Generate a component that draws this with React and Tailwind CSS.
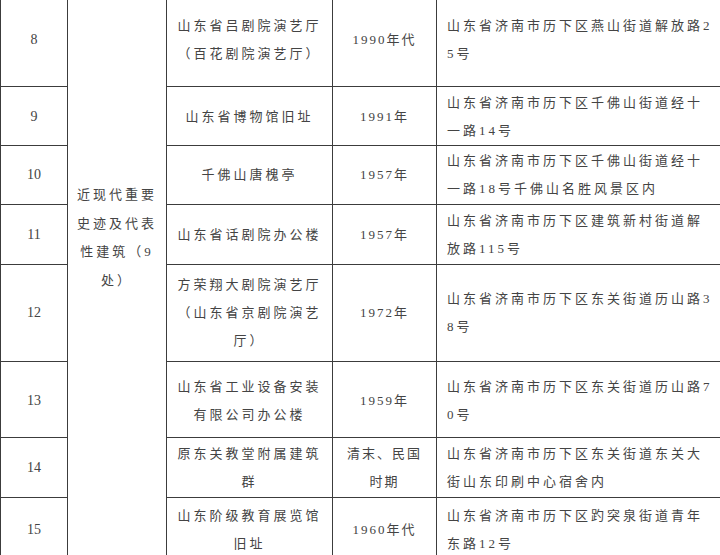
const rows = [
  {
    n: "8",
    name: ["山东省吕剧院演艺厅", "（百花剧院演艺厅）"],
    year: ["1990年代"],
    addr: ["山东省济南市历下区燕山街道解放路2", "5号"],
    h: "h-[86px]",
    pad: "pb-[6px]",
  },
  {
    n: "9",
    name: ["山东省博物馆旧址"],
    year: ["1991年"],
    addr: ["山东省济南市历下区千佛山街道经十", "一路14号"],
    h: "h-[59px]",
    pad: "pt-[2px]",
  },
  {
    n: "10",
    name: ["千佛山唐槐亭"],
    year: ["1957年"],
    addr: ["山东省济南市历下区千佛山街道经十", "一路18号千佛山名胜风景区内"],
    h: "h-[59px]",
    pad: "",
  },
  {
    n: "11",
    name: ["山东省话剧院办公楼"],
    year: ["1957年"],
    addr: ["山东省济南市历下区建筑新村街道解", "放路115号"],
    h: "h-[60px]",
    pad: "pt-[2px]",
  },
  {
    n: "12",
    name: ["方荣翔大剧院演艺厅", "（山东省京剧院演艺", "厅）"],
    year: ["1972年"],
    addr: ["山东省济南市历下区东关街道历山路3", "8号"],
    h: "h-[97px]",
    pad: "",
  },
  {
    n: "13",
    name: ["山东省工业设备安装", "有限公司办公楼"],
    year: ["1959年"],
    addr: ["山东省济南市历下区东关街道历山路7", "0号"],
    h: "h-[76px]",
    pad: "pt-[3px]",
  },
  {
    n: "14",
    name: ["原东关教堂附属建筑", "群"],
    year: ["清末、民国", "时期"],
    addr: ["山东省济南市历下区东关街道东关大", "街山东印刷中心宿舍内"],
    h: "h-[60px]",
    pad: "pt-[2px]",
  },
  {
    n: "15",
    name: ["山东阶级教育展览馆", "旧址"],
    year: ["1960年代"],
    addr: ["山东省济南市历下区趵突泉街道青年", "东路12号"],
    h: "h-[66px]",
    pad: "",
  },
];

const Lines = ({ items }) => (
  <>
    {items.map((line, i) => (
      <div key={i} className="whitespace-nowrap">
        {line}
      </div>
    ))}
  </>
);

const cell = "border border-[#3c3c3c] align-middle";

const App = () => {
  return (
    <div className="h-[555px] w-[720px] overflow-hidden bg-white">
      <table
        className="w-[719px] table-fixed border-collapse text-[13px] leading-[28px] tracking-[3px] text-[#444]"
        style={{ fontFamily: '"Liberation Serif", "Noto Sans CJK SC", serif' }}>
        <colgroup>
          <col className="w-[67px]" />
          <col className="w-[99px]" />
          <col className="w-[166px]" />
          <col className="w-[104px]" />
          <col className="w-[283px]" />
        </colgroup>
        <tbody>
          {rows.map((r, idx) => (
            <tr key={r.n} className={idx === 0 ? "[&>td]:border-t-0" : ""}>
              <td
                className={`${cell} ${r.h} ${r.pad} text-center text-[14px] tracking-normal`}>
                {r.n}
              </td>
              {idx === 0 && (
                <td
                  rowSpan={rows.length}
                  className="border border-t-0 border-[#3c3c3c] px-[9px] pt-[181px] align-top text-center leading-[28.5px]">
                  近现代重要史迹及代表性建筑（9处）
                </td>
              )}
              <td className={`${cell} ${r.pad} text-center`}>
                <Lines items={r.name} />
              </td>
              <td className={`${cell} ${r.pad} text-center tracking-[2px]`}>
                <Lines items={r.year} />
              </td>
              <td className={`${cell} ${r.pad} border-r-0 pl-[10px] text-left`}>
                <Lines items={r.addr} />
              </td>
            </tr>
          ))}
        </tbody>
      </table>
    </div>
  );
};

export default App;
